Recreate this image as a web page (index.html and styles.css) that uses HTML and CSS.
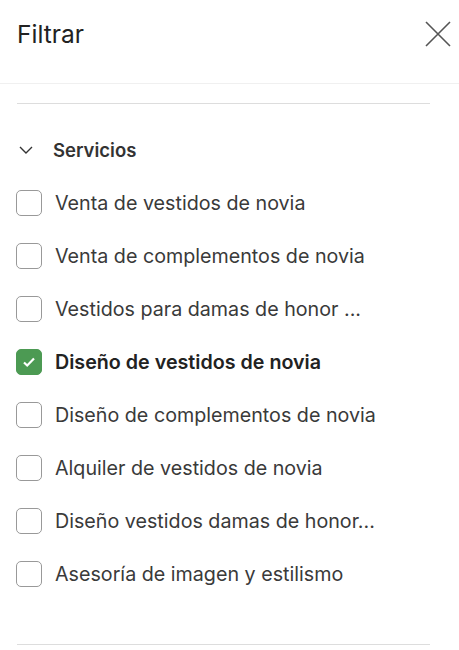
FILE: index.html
```html
<!doctype html>
<html lang="es">
<head>
    <meta charset="utf-8">
    <meta name="viewport" content="width=device-width, initial-scale=1">
    <title>Filtrar</title>
    <link rel="stylesheet" href="styles.css">
</head>
<body>

<header class="filter-header">
    <h1 class="filter-title">Filtrar</h1>
    <button type="button" class="close" aria-label="Cerrar">
        <svg width="26" height="26" viewBox="0 0 26 26">
            <path d="M1 1 L25 25 M25 1 L1 25" stroke="#555" stroke-width="1.6" fill="none"/>
        </svg>
    </button>
</header>

<main class="filter-body">
    <hr class="divider">

    <section class="group">
        <div class="group-title">
            <svg class="chevron" width="14" height="8" viewBox="0 0 14 8">
                <path d="M1 1 L7 7 L13 1" stroke="#333" stroke-width="1.4" fill="none"/>
            </svg>
            <span>Servicios</span>
        </div>

        <ul class="options">
            <li class="option"><span class="box"></span>Venta de vestidos de novia</li>
            <li class="option"><span class="box"></span>Venta de complementos de novia</li>
            <li class="option"><span class="box"></span>Vestidos para damas de honor ...</li>
            <li class="option checked">
                <span class="box">
                    <svg width="14" height="12" viewBox="0 0 14 12">
                        <path d="M2 6.5 L5.2 9.5 L12 2.5" stroke="#fff" stroke-width="2.2" fill="none"/>
                    </svg>
                </span>Diseño de vestidos de novia</li>
            <li class="option"><span class="box"></span>Diseño de complementos de novia</li>
            <li class="option"><span class="box"></span>Alquiler de vestidos de novia</li>
            <li class="option"><span class="box"></span>Diseño vestidos damas de honor...</li>
            <li class="option"><span class="box"></span>Asesoría de imagen y estilismo</li>
        </ul>
    </section>

    <hr class="divider">
</main>

</body>
</html>
```

FILE: styles.css
```css
*, *:before, *:after {
    box-sizing: border-box;
    margin: 0;
    padding: 0;
}

body {
    font-family: "Inter", "Open Sans", sans-serif;
    background: #fff;
    color: #333;
}

.filter-header {
    display: flex;
    align-items: center;
    justify-content: space-between;
    height: 84px;
    padding: 0 8px 0 17px;
    border-bottom: solid 1px #f0f0f0;
}

.filter-title {
    font-size: 24.5px;
    font-weight: 400;
    color: #222;
    margin-top: -16px;
}

.close {
    display: flex;
    background: none;
    border: none;
    padding: 0;
    margin-top: -16px;
}

.filter-body {
    padding: 19px 29px 0 17px;
}

.divider {
    border: none;
    border-top: solid 1px #ddd;
}

.group {
    padding: 34px 0 57px;
}

.group-title {
    display: flex;
    align-items: center;
    gap: 20px;
    font-size: 18.5px;
    font-weight: 600;
    color: #333;
    padding-left: 2px;
    height: 24px;
}

.options {
    list-style: none;
    margin-top: 28px;
    display: flex;
    flex-direction: column;
    gap: 27px;
}

.option {
    display: flex;
    align-items: center;
    gap: 13px;
    height: 26px;
    font-size: 19.7px;
    color: #3a3a3a;
    white-space: nowrap;
}

.box {
    flex: none;
    display: flex;
    align-items: center;
    justify-content: center;
    width: 26px;
    height: 26px;
    border: solid 1.5px #999;
    border-radius: 5px;
    margin-left: -1px;
}

.checked {
    font-weight: 600;
    color: #222;
}

.checked .box {
    background: #4c9a53;
    border-color: #4c9a53;
}
```
